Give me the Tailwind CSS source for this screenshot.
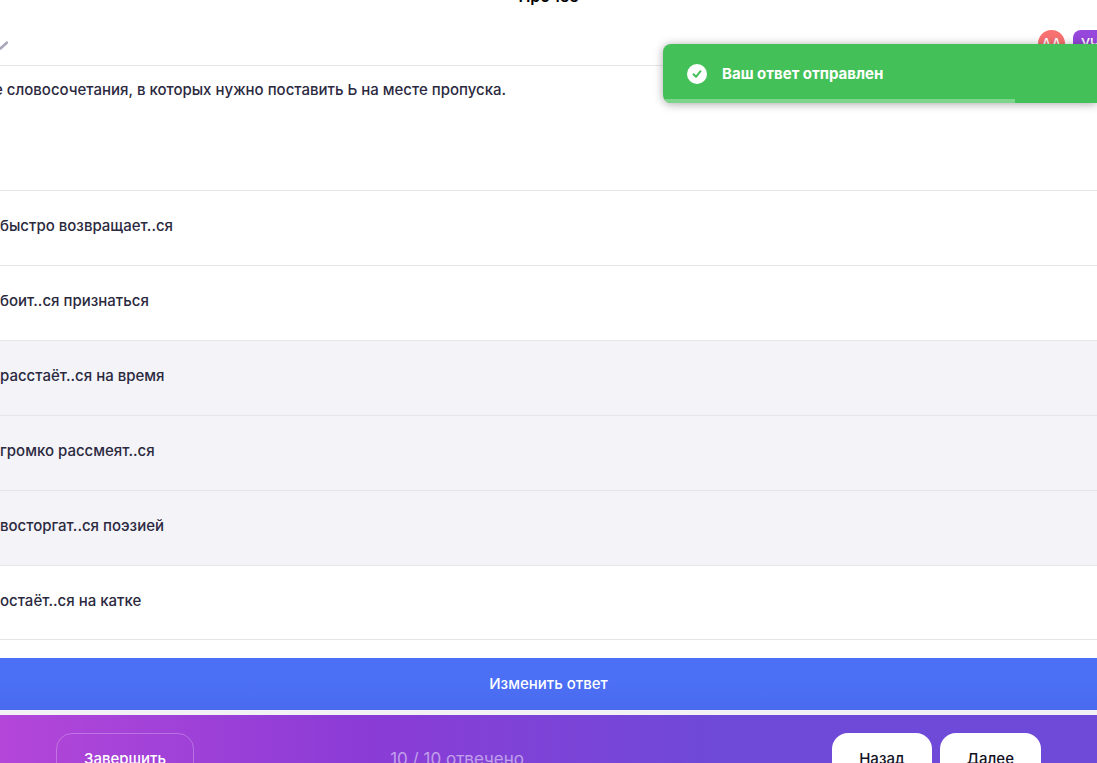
<!DOCTYPE html>
<html lang="ru">
<head>
    <meta charset="UTF-8">
    <meta name="viewport" content="width=device-width, initial-scale=1.0">
    <title>Прочее</title>
    <script src="https://cdn.jsdelivr.net/npm/@tailwindcss/browser@4"></script>
</head>
<body class="bg-white font-['Inter',sans-serif] text-[15px] leading-6 font-medium text-[#2b2940]">

    <div class="relative flex flex-col h-screen overflow-hidden">

        <!-- Header -->
        <header class="shrink-0">
            <h1 class="-mt-4 h-6 text-center text-base leading-6 font-semibold text-black">Прочее</h1>
            <div class="flex items-start justify-between h-[58px] border-b border-[#e6e6ea]">
                <button type="button" class="-ml-2 mt-7" aria-label="Развернуть">
                    <svg class="w-4 h-4" viewBox="0 0 16 16" fill="none" stroke="#a9a7b8" stroke-width="2.4" stroke-linecap="round" stroke-linejoin="round">
                        <path d="M2 6.500l6.500 6L15 6.500"/>
                    </svg>
                </button>
                <div class="flex gap-2 mt-[22px]">
                    <span class="flex items-center justify-center w-[27px] h-[27px] rounded-full bg-[#f87171] text-sm text-white">АА</span>
                    <button type="button" class="h-7 w-6 pl-2 overflow-hidden text-left rounded-l-lg bg-[#9747dc] text-sm text-white">УЧ</button>
                </div>
            </div>
        </header>

        <!-- Question -->
        <main class="shrink-0">
            <p class="-ml-1.5 h-[124px] pt-3 whitespace-nowrap">е словосочетания, в которых нужно поставить Ь на месте пропуска.</p>

            <div class="border-b border-[#e6e6ea]">
                <button type="button" aria-pressed="false" class="block w-full h-[75px] border-t border-[#e6e6ea] pb-1 text-left">быстро возвращает..ся</button>
                <button type="button" aria-pressed="false" class="block w-full h-[75px] border-t border-[#e6e6ea] pb-1 text-left">боит..ся признаться</button>
                <button type="button" aria-pressed="true" class="block w-full h-[75px] border-t border-[#e6e6ea] bg-[#f3f3f8] pb-1 text-left">расстаёт..ся на время</button>
                <button type="button" aria-pressed="true" class="block w-full h-[75px] border-t border-[#e6e6ea] bg-[#f3f3f8] pb-1 text-left">громко рассмеят..ся</button>
                <button type="button" aria-pressed="true" class="block w-full h-[75px] border-t border-[#e6e6ea] bg-[#f3f3f8] pb-1 text-left">восторгат..ся поэзией</button>
                <button type="button" aria-pressed="false" class="block w-full h-[74px] border-t border-[#e6e6ea] pb-1 text-left">остаёт..ся на катке</button>
            </div>

            <button type="button" class="block w-full h-[52px] mt-[18px] bg-linear-to-b from-[#4b70f6] from-40% to-[#4a6aee] text-white">Изменить ответ</button>
        </main>

        <!-- Bottom bar -->
        <div class="shrink-0 h-[5px] bg-[#f2f1f5]"></div>
        <footer class="shrink-0 flex items-start px-14 pt-[18px] h-24 bg-linear-to-r from-[#b446d9] via-[#8b3bd6] via-33% to-[#6f49d8] to-65%">
            <button type="button" class="h-[52px] px-[27px] rounded-2xl border border-white/25 text-white">Завершить</button>
            <span class="flex-1 pr-28 text-center text-[17px] leading-[52px] font-normal text-white/50">10 / 10 отвечено</span>
            <div class="flex gap-2">
                <button type="button" class="h-[52px] px-[27px] rounded-2xl bg-white text-[#14121f]">Назад</button>
                <button type="button" class="h-[52px] px-[27px] rounded-2xl bg-white text-[#14121f]">Далее</button>
            </div>
        </footer>

        <!-- Toast -->
        <div role="status" class="absolute top-11 right-0 w-[434px] h-[59px] rounded-l-lg bg-[#43c158] shadow-[0_1px_10px_rgba(0,0,0,0.35)]">
            <div class="flex flex-col h-full overflow-hidden rounded-l-lg">
                <div class="flex flex-1 items-center gap-[15px] pl-6 pt-1 font-bold text-white">
                    <svg class="w-5 h-5" viewBox="0 0 20 20" fill="none">
                        <circle cx="10" cy="10" r="10" fill="#fff"/>
                        <path d="M6.500 10.200l2.500 2.600 4.500-5.600" stroke="#43c158" stroke-width="2" stroke-linecap="round" stroke-linejoin="round"/>
                    </svg>
                    <span>Ваш ответ отправлен</span>
                </div>
                <div class="h-1 bg-[#7dd58b]" style="width: 81%"></div>
            </div>
        </div>

    </div>

</body>
</html>
